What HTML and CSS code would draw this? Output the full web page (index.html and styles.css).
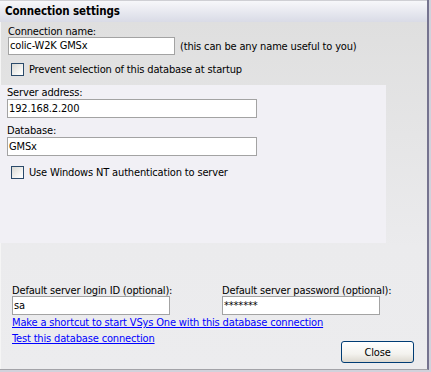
FILE: index.html
```html
<!DOCTYPE html>
<html>
<head>
<meta charset="utf-8">
<link rel="stylesheet" href="styles.css">
</head>
<body>
<div class="win">
  <div class="title">Connection settings</div>
  <div class="body">
    <div class="top">
      <div class="lbl">Connection name:</div>
      <div class="row">
        <div class="input w-name">colic-W2K GMSx</div>
        <span class="hint">(this can be any name useful to you)</span>
      </div>
      <div class="check"><span class="box"></span>Prevent selection of this database at startup</div>
    </div>
    <div class="panel">
      <div class="lbl">Server address:</div>
      <div class="input w-srv">192.168.2.200</div>
      <div class="lbl lbl-db">Database:</div>
      <div class="input w-srv">GMSx</div>
      <div class="check check-nt"><span class="box"></span>Use Windows NT authentication to server</div>
    </div>
    <div class="bottom">
      <div class="creds">
        <div class="field">
          <div class="lbl">Default server login ID (optional):</div>
          <div class="input">sa</div>
        </div>
        <div class="field">
          <div class="lbl">Default server password (optional):</div>
          <div class="input">*******</div>
        </div>
      </div>
      <div class="actions">
        <div class="links">
          <a href="#" class="link">Make a shortcut to start VSys One with this database connection</a>
          <a href="#" class="link">Test this database connection</a>
        </div>
        <button class="btn">Close</button>
      </div>
    </div>
  </div>
</div>
</body>
</html>
```

FILE: styles.css
```css
html, body {
  margin: 0;
  padding: 0;
}
body {
  width: 431px;
  height: 372px;
  background: #d2d2dc;
  font-family: "DejaVu Sans Condensed", "DejaVu Sans", sans-serif;
  font-size: 11px;
  letter-spacing: -0.16px;
  color: #000;
  overflow: hidden;
}
.win {
  width: 427px;
  height: 369px;
  border-right: 2px solid #75738f;
  border-bottom: 1px solid #a3a3a8;
  display: flex;
  flex-direction: column;
}
.title {
  height: 21px;
  border-top: 1px solid #cfcfd4;
  background: linear-gradient(#f7f7fa, #d9dbe6);
  font-weight: bold;
  font-size: 11.5px;
  letter-spacing: -0.1px;
  line-height: 20px;
  padding-left: 5px;
}
.body {
  flex: 1;
  background: linear-gradient(#dfdfdf 0%, #ebebed 65%, #ececee 100%);
  box-shadow: inset 1px 0 0 #f5f5f5;
  display: flex;
  flex-direction: column;
}
.lbl {
  line-height: 11px;
  height: 11px;
  white-space: nowrap;
}
.top {
  padding: 4px 0 0 8px;
  height: 59px;
}
.row {
  display: flex;
  align-items: center;
}
.input {
  box-sizing: border-box;
  height: 19px;
  border: 1px solid #a3a3a3;
  background: #fff;
  line-height: 17px;
  padding-left: 1px;
  white-space: nowrap;
}
.w-name {
  width: 167px;
  height: 18px;
  line-height: 16px;
}
.hint {
  margin-left: 5px;
}
.check {
  display: flex;
  align-items: center;
  margin: 8px 0 0 3px;
  height: 13px;
  line-height: 13px;
  white-space: nowrap;
}
.box {
  box-sizing: border-box;
  width: 13px;
  height: 13px;
  border: 1px solid #2a4a6a;
  background: linear-gradient(135deg, #d8d8d4, #f7f7f5 70%, #fff);
  margin-right: 5px;
  flex: none;
}
.panel {
  width: 379px;
  height: 156px;
  padding: 2px 0 0 7px;
  background: #f1f0f5;
}
.panel .lbl {
  margin-bottom: 1px;
}
.w-srv {
  width: 250px;
}
.lbl-db {
  margin-top: 7px;
}
.check-nt {
  margin-top: 10px;
  margin-left: 4px;
}
.bottom {
  padding: 42px 0 0 12px;
}
.creds {
  display: grid;
  grid-template-columns: 158px 158px;
  column-gap: 52px;
}
.actions {
  display: flex;
  align-items: flex-start;
}
.links {
  display: flex;
  flex-direction: column;
  align-items: flex-start;
}
.link {
  color: #0000ff;
  text-decoration: underline;
  line-height: 16px;
  white-space: nowrap;
}
.btn {
  margin: 26px 13px 0 auto;
  width: 73px;
  height: 22px;
  border: 1px solid #003c74;
  border-radius: 3px;
  background: linear-gradient(#ffffff, #f3f2ee 60%, #dcd8cf);
  font-family: inherit;
  font-size: 11px;
  letter-spacing: inherit;
  color: #000;
  padding: 0;
}
```
